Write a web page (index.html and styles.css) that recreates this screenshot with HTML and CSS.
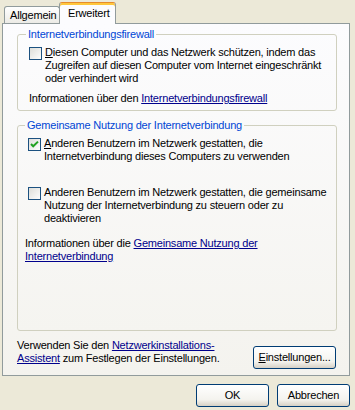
FILE: index.html
```html
<!DOCTYPE html>
<html lang="de">
<head>
    <meta charset="UTF-8">
    <title>Eigenschaften - Erweitert</title>
    <link rel="stylesheet" href="styles.css">
</head>
<body>
    <div class="dialog">
        <div class="tabs">
            <div class="tab">Allgemein</div>
            <div class="tab active">Erweitert</div>
        </div>

        <div class="panel">
            <fieldset class="group group-firewall">
                <legend>Internetverbindungsfirewall</legend>
                <label class="check">
                    <span class="box"><svg width="13" height="13" viewBox="0 0 13 13"><defs><linearGradient id="cb1" x1="0" y1="0" x2="1" y2="1"><stop offset="0" stop-color="#dcdcd7"/><stop offset="1" stop-color="#ffffff"/></linearGradient></defs><rect x="0.5" y="0.5" width="12" height="12" fill="url(#cb1)" stroke="#1c5180"/></svg></span>
                    <span class="check-text"><u>D</u>iesen Computer und das Netzwerk schützen, indem das Zugreifen auf diesen Computer vom Internet eingeschränkt oder verhindert wird</span>
                </label>
                <p class="info">Informationen über den <a href="#">Internetverbindungsfirewall</a></p>
            </fieldset>

            <fieldset class="group group-ics">
                <legend>Gemeinsame Nutzung der Internetverbindung</legend>
                <label class="check">
                    <span class="box"><svg width="13" height="13" viewBox="0 0 13 13"><defs><linearGradient id="cb2" x1="0" y1="0" x2="1" y2="1"><stop offset="0" stop-color="#dcdcd7"/><stop offset="1" stop-color="#ffffff"/></linearGradient></defs><rect x="0.5" y="0.5" width="12" height="12" fill="url(#cb2)" stroke="#1c5180"/><path d="M3 6 L5.2 8.3 L10 3.6" fill="none" stroke="#21a121" stroke-width="2"/></svg></span>
                    <span class="check-text"><u>A</u>nderen Benutzern im Netzwerk gestatten, die Internetverbindung dieses Computers zu verwenden</span>
                </label>
                <label class="check check-second">
                    <span class="box"><svg width="13" height="13" viewBox="0 0 13 13"><defs><linearGradient id="cb3" x1="0" y1="0" x2="1" y2="1"><stop offset="0" stop-color="#dcdcd7"/><stop offset="1" stop-color="#ffffff"/></linearGradient></defs><rect x="0.5" y="0.5" width="12" height="12" fill="url(#cb3)" stroke="#1c5180"/></svg></span>
                    <span class="check-text">Anderen Benutzern im Netzwerk gestatten, die gemeinsame Nutzung der Internetverbindung zu steuern oder zu deaktivieren</span>
                </label>
                <p class="info info-ics">Informationen über die <a href="#">Gemeinsame Nutzung der Internetverbindung</a></p>
            </fieldset>

            <div class="footer-row">
                <p class="wizard">Verwenden Sie den <a href="#">Netzwerkinstallations-Assistent</a> zum Festlegen der Einstellungen.</p>
                <button class="btn btn-wide"><u>E</u>instellungen...</button>
            </div>
        </div>

        <div class="buttons">
            <button class="btn">OK</button>
            <button class="btn">Abbrechen</button>
        </div>
    </div>
</body>
</html>
```

FILE: styles.css
```css
body {
    margin: 0;
    background: #ece9d8;
    font-family: "Liberation Sans", Arial, sans-serif;
    font-size: 11px;
    line-height: 13px;
    letter-spacing: -0.2px;
    color: #000;
}
.dialog {
    width: 355px;
    height: 410px;
    display: flex;
    flex-direction: column;
}
.tabs {
    display: flex;
    align-items: flex-end;
    padding-left: 4px;
    height: 23px;
}
.tab {
    box-sizing: border-box;
    width: 56px;
    height: 17px;
    padding: 2px 0 0 5px;
    border: 1px solid #919b9c;
    border-bottom: none;
    border-radius: 3px 3px 0 0;
    background: linear-gradient(#ffffff, #ecebe6);
    white-space: nowrap;
}
.tab.active {
    position: relative;
    z-index: 1;
    width: 57px;
    height: 22px;
    margin-left: -1px;
    margin-bottom: -1px;
    padding: 4px 0 0 8px;
    border-top: 1px solid #e68b2c;
    box-shadow: inset 0 2px 0 #ffc73c;
    background: #fcfcfe;
}
.panel {
    margin-left: 2px;
    width: 346px;
    height: 351px;
    border: 1px solid #919b9c;
    background: linear-gradient(#fcfcfe, #f4f3ee);
    display: flex;
    flex-direction: column;
}
.group {
    margin: 4px 12px 0 14px;
    padding: 0 6px 5px 11px;
    border: 1px solid #d0d0bf;
    border-radius: 3px;
}
.group legend {
    color: #0046d5;
    padding: 0 2px;
    margin-left: -3px;
}
.group-ics {
    margin-top: 8px;
    height: 212px;
    padding-left: 10px;
    box-sizing: border-box;
}
.check {
    display: flex;
    gap: 3px;
    margin-top: 5px;
}
.box {
    flex: none;
    height: 13px;
    padding-top: 1px;
}
.check-second {
    margin-top: 23px;
}
.info {
    margin: 7px 0 0 0;
}
.info-ics {
    margin: 12px 0 0 -3px;
}
a {
    color: #00008c;
}
.footer-row {
    display: flex;
    align-items: flex-start;
    margin: 8px 13px 0 14px;
}
.wizard {
    margin: 0;
    flex: 1;
}
.btn {
    font: inherit;
    letter-spacing: inherit;
    color: #000;
    width: 73px;
    height: 23px;
    padding: 0;
    border: 1px solid #003c74;
    border-radius: 3px;
    background: linear-gradient(#ffffff 0%, #f4f3ee 70%, #d6d0c5 100%);
}
.btn-wide {
    width: 83px;
    margin-top: 7px;
}
.buttons {
    display: flex;
    justify-content: flex-end;
    gap: 8px;
    padding: 8px 5px 0 0;
}
```
